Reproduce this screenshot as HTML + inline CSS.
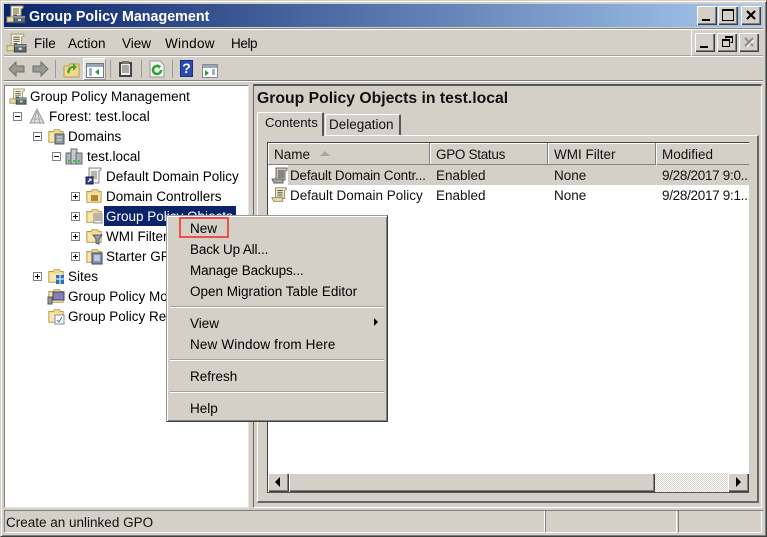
<!DOCTYPE html>
<html><head><meta charset="utf-8">
<style>
html,body{margin:0;padding:0;width:767px;height:537px;overflow:hidden;background:#d4d0c8}
body{font-family:"Liberation Sans",sans-serif;font-size:13.5px;color:#000;position:relative}
.a{position:absolute}
.t{position:absolute;white-space:nowrap;line-height:22px;height:20px}
svg{position:absolute;display:block}
.btn{position:absolute;width:19px;height:18px;background:#d4d0c8;box-shadow:inset 1px 1px 0 #fff,inset -1px -1px 0 #404040,inset -2px -2px 0 #808080}
.sep{position:absolute;height:1px;background:#a5a29b;left:170px;width:214px;box-shadow:0 1px 0 #fff}
.exp{position:absolute;width:7px;height:7px;border:1px solid #808080;background:#fff}
.exp:before{content:"";position:absolute;left:1px;top:3px;width:5px;height:1px;background:#000}
.exp.p:after{content:"";position:absolute;left:3px;top:1px;width:1px;height:5px;background:#000}
.hd{position:absolute;top:143px;height:22px;line-height:23px;background:#d4d0c8;box-shadow:inset -1px -1px 0 #808080,inset 1px 1px 0 #fff;padding-left:6px;box-sizing:border-box;color:#111}
</style></head><body>
<svg width="0" height="0"><defs>
<symbol id="scroll" viewBox="0 0 20 20"><path d="M5 2h12v2l-2 1v9H5z" fill="#f4ecc8" stroke="#8c8460"/><path d="M7 5h6M7 7h6M7 9h6M7 11h6" stroke="#555"/><path d="M1 13h12v4H3z" fill="#e8dca8" stroke="#8c8460"/></symbol>
<symbol id="gp" viewBox="0 0 20 20"><path d="M5 1h12v2l-2 1v8H5z" fill="#f6f0d0" stroke="#a89c70"/><path d="M7 4h6M7 6h6M7 8h6M7 10h4" stroke="#666"/><path d="M1 12h10v5H1z" fill="#e6d9a2" stroke="#a89c70"/><rect x="8" y="11" width="11" height="7" fill="#5f6b70" stroke="#3a4448"/><rect x="8" y="11" width="11" height="2" fill="#8a979c"/><rect x="12" y="14" width="3" height="2" fill="#d8d8d8"/></symbol>
<symbol id="folder" viewBox="0 0 20 20"><path d="M2 5h5l1-2h6l1 2h3v12H2z" fill="#f3d98c" stroke="#b59a54"/><path d="M3 7h14v9H3z" fill="#f8e7ab"/></symbol>
</defs></svg>

<!-- window frame -->
<div class="a" style="left:0;top:0;width:767px;height:537px;box-sizing:border-box;border:1px solid #404040;border-top-color:#d4d0c8;border-left-color:#d4d0c8;box-shadow:inset 1px 1px 0 #fff,inset -1px -1px 0 #808080"></div>

<!-- title bar -->
<div class="a" style="left:4px;top:4px;width:759px;height:23px;background:linear-gradient(90deg,#0a246a 0%,#a6caf0 100%)"></div>
<svg style="left:6px;top:5px" width="20" height="20"><use href="#gp"/></svg>
<div class="t" style="left:29px;top:6px;color:#fff;font-weight:bold;font-size:14.3px">Group Policy Management</div>
<div class="btn" style="left:697px;top:6px;width:20px;height:19px"><div class="a" style="left:5px;top:13px;width:8px;height:2px;background:#000"></div></div>
<div class="btn" style="left:718px;top:6px;width:20px;height:19px"><div class="a" style="left:4px;top:3px;width:10px;height:9px;border:1px solid #000;border-top-width:2px"></div></div>
<div class="btn" style="left:741px;top:6px;width:20px;height:19px"><svg style="left:5px;top:4px" width="11" height="10"><path d="M1 1l8 8M9 1l-8 8" stroke="#000" stroke-width="2"/></svg></div>

<!-- menu bar -->
<div class="a" style="left:4px;top:28px;width:759px;height:1px;background:#808080"></div>
<div class="a" style="left:4px;top:29px;width:759px;height:1px;background:#fff"></div>
<div class="a" style="left:4px;top:56px;width:759px;height:1px;background:#fff"></div>
<div class="a" style="left:4px;top:55px;width:759px;height:1px;background:#a5a29b"></div>
<svg style="left:6px;top:33px" width="21" height="21"><use href="#gp"/></svg>
<div class="t" style="left:34px;top:33px">File</div>
<div class="t" style="left:68px;top:33px">Action</div>
<div class="t" style="left:122px;top:33px">View</div>
<div class="t" style="left:165px;top:33px;letter-spacing:.3px">Window</div>
<div class="t" style="left:231px;top:33px;letter-spacing:-.4px">Help</div>
<div class="a" style="left:691px;top:29px;width:1px;height:27px;background:#fff"></div>
<div class="btn" style="left:695px;top:33px;width:20px;height:19px"><div class="a" style="left:5px;top:13px;width:8px;height:2px;background:#000"></div></div>
<div class="btn" style="left:717px;top:33px;width:20px;height:19px"><svg style="left:4px;top:3px" width="13" height="12"><path d="M4.500 2.500V.5h7v6h-2M4 1.500h7" stroke="#000" fill="none"/><rect x="1.500" y="3.500" width="7" height="7" fill="none" stroke="#000"/><path d="M1 4.500h8" stroke="#000"/></svg></div>
<div class="btn" style="left:739px;top:33px;width:20px;height:19px"><svg style="left:5px;top:4px" width="12" height="11"><path d="M1 1l8 8M9 1l-8 8" stroke="#8f8d88" stroke-width="2"/><path d="M3 10l7-7" stroke="#fff"/></svg></div>

<!-- toolbar -->
<svg style="left:8px;top:60px" width="18" height="18"><path d="M1 9l7-7v4h8v6H8v4z" fill="#9a9a94" stroke="#6e6e6a"/></svg>
<svg style="left:31px;top:60px" width="18" height="18"><path d="M17 9l-7-7v4H2v6h8v4z" fill="#9a9a94" stroke="#6e6e6a"/></svg>
<div class="a" style="left:55px;top:60px;width:1px;height:18px;background:#999"></div>
<svg style="left:63px;top:60px" width="17" height="18"><path d="M1 6h5l1-2h9v13H1z" fill="#f3d98c" stroke="#b59a54"/><path d="M4 12c1-5 4-6 6-6V3l4 4-4 4V8c-2 0-3 2-4 6z" fill="#46a030"/></svg>
<div class="a" style="left:83px;top:58px;width:23px;height:22px;box-sizing:border-box;background:#e8e6e0;box-shadow:inset 1px 1px 0 #fff,inset -1px -1px 0 #999"></div>
<svg style="left:86px;top:63px" width="18" height="15"><rect x=".5" y=".5" width="17" height="14" fill="#fff" stroke="#778"/><rect x="1" y="1" width="16" height="3" fill="#98a8b8"/><path d="M3 6h3M3 8h3M3 10h3M3 12h3" stroke="#4060a0"/><path d="M13 6v6l-4-3z" fill="#2a9a30"/></svg>
<div class="a" style="left:110px;top:60px;width:1px;height:18px;background:#999"></div>
<svg style="left:118px;top:60px" width="15" height="18"><rect x="1" y="2" width="13" height="15" fill="#444"/><rect x="3" y="4" width="9" height="11" fill="#eee"/><rect x="4" y="1" width="7" height="3" fill="#777"/><path d="M4 6h7M4 8h7M4 10h7M4 12h7" stroke="#666"/></svg>
<div class="a" style="left:141px;top:60px;width:1px;height:18px;background:#999"></div>
<svg style="left:149px;top:60px" width="16" height="18"><path d="M1 1h10l4 4v12H1z" fill="#f4f4f4" stroke="#999"/><path d="M12 10a4 4 0 1 1-2-3.500" fill="none" stroke="#2aa52a" stroke-width="2.500"/><path d="M8 4l4 2-2 3z" fill="#2aa52a"/></svg>
<div class="a" style="left:172px;top:60px;width:1px;height:18px;background:#999"></div>
<div class="a" style="left:180px;top:60px;width:13px;height:17px;background:#2b4bb0;color:#fff;font-weight:bold;font-size:14px;line-height:17px;text-align:center;box-shadow:inset 0 0 0 1px #1b2f80">?</div>
<svg style="left:202px;top:64px" width="16" height="14"><rect x=".5" y=".5" width="15" height="13" fill="#fff" stroke="#889"/><rect x="1" y="1" width="14" height="3" fill="#98a8b8"/><path d="M3 6v6l4-3z" fill="#2a9a30"/><path d="M10 6h3M10 8h3M10 10h3" stroke="#4060a0"/></svg>

<!-- toolbar bottom -->
<div class="a" style="left:4px;top:80px;width:759px;height:1px;background:#808080"></div>
<div class="a" style="left:4px;top:81px;width:759px;height:1px;background:#fff"></div>

<!-- tree pane -->
<div class="a" style="left:4px;top:85px;width:245px;height:423px;box-sizing:border-box;background:#fff;border:1px solid #808080;border-right-color:#e8e6e0;border-bottom-color:#e8e6e0"></div>
<svg style="left:9px;top:88px" width="18" height="18"><use href="#gp"/></svg>
<div class="t" style="left:30px;top:86px">Group Policy Management</div>
<div class="exp" style="left:13px;top:112px"></div>
<svg style="left:28px;top:107px" width="18" height="18"><path d="M9 2l7 14H2z" fill="#ddd" stroke="#999"/><path d="M9 2l-3 14M9 2l3 14M4 12h10" stroke="#aaa" fill="none"/></svg>
<div class="t" style="left:49px;top:106px;letter-spacing:.1px">Forest: test.local</div>
<div class="exp" style="left:33px;top:132px"></div>
<svg style="left:47px;top:127px" width="18" height="18"><use href="#folder"/><rect x="8" y="7" width="9" height="10" fill="#8a9a98" stroke="#556"/><path d="M10 10h5M10 13h5" stroke="#dde"/></svg>
<div class="t" style="left:68px;top:126px">Domains</div>
<div class="exp" style="left:52px;top:152px"></div>
<svg style="left:65px;top:147px" width="18" height="18"><rect x="1" y="6" width="6" height="11" fill="#a8b4b4" stroke="#667"/><rect x="6" y="2" width="6" height="15" fill="#c2cccc" stroke="#667"/><rect x="11" y="6" width="6" height="11" fill="#a8b4b4" stroke="#667"/><path d="M3 14h2M8 14h2M13 14h2" stroke="#3fc03f" stroke-width="2"/></svg>
<div class="t" style="left:87px;top:146px">test.local</div>
<svg style="left:85px;top:167px" width="18" height="18"><path d="M4 1h12v2l-2 1v12H4z" fill="#f4f1e4" stroke="#888"/><path d="M6 5h6M6 7h6M6 9h6M6 11h6" stroke="#777"/><rect x="1" y="10" width="7" height="7" fill="#3040a0" stroke="#223"/><path d="M3 15l3-3M4 12h2v2" stroke="#fff" fill="none"/></svg>
<div class="t" style="left:106px;top:166px">Default Domain Policy</div>
<div class="exp p" style="left:71px;top:192px"></div>
<svg style="left:85px;top:187px" width="18" height="18"><use href="#folder"/><rect x="6" y="8" width="7" height="6" fill="#b08a30"/></svg>
<div class="t" style="left:106px;top:186px">Domain Controllers</div>
<div class="exp p" style="left:71px;top:212px"></div>
<svg style="left:85px;top:207px" width="18" height="18"><use href="#folder"/><path d="M9 7h8v9H9z" fill="#f4f1e4" stroke="#888"/><path d="M10 9h6M10 11h6M10 13h6" stroke="#777"/></svg>
<div class="t" style="left:104px;top:206px;width:132px;height:20px;background:#0a246a;color:#fff;padding-left:2px;box-sizing:border-box">Group Policy Objects</div>
<div class="exp p" style="left:71px;top:232px"></div>
<svg style="left:85px;top:227px" width="18" height="18"><use href="#folder"/><path d="M8 8h9l-3 4v5l-3-1v-4z" fill="#90a0a8" stroke="#556"/></svg>
<div class="t" style="left:106px;top:226px">WMI Filters</div>
<div class="exp p" style="left:71px;top:252px"></div>
<svg style="left:85px;top:247px" width="18" height="18"><use href="#folder"/><rect x="7" y="6" width="10" height="11" fill="#7d93b8" stroke="#445"/><path d="M9 9h6M9 11h6M9 13h6" stroke="#fff"/></svg>
<div class="t" style="left:106px;top:246px">Starter GPOs</div>
<div class="exp p" style="left:33px;top:272px"></div>
<svg style="left:47px;top:267px" width="18" height="18"><use href="#folder"/><rect x="9" y="8" width="8" height="9" fill="#2a70c0"/><path d="M13 8v9M9 12h8" stroke="#fff"/></svg>
<div class="t" style="left:68px;top:266px">Sites</div>
<svg style="left:47px;top:287px" width="18" height="18"><use href="#folder"/><rect x="6" y="5" width="11" height="8" fill="#8080c0" stroke="#445"/><rect x="1" y="10" width="4" height="7" fill="#999" stroke="#556"/></svg>
<div class="t" style="left:68px;top:286px">Group Policy Modeling</div>
<svg style="left:47px;top:307px" width="18" height="18"><use href="#folder"/><rect x="8" y="8" width="9" height="9" fill="#fff" stroke="#889"/><path d="M10 13l2 2 3-5" stroke="#3a70b0" fill="none"/></svg>
<div class="t" style="left:68px;top:306px">Group Policy Results</div>

<!-- right pane -->
<div class="a" style="left:253px;top:84px;width:509px;height:424px;box-sizing:border-box;border-top:2px solid #555;border-left:1px solid #666;border-right:1px solid #fff;border-bottom:1px solid #fff"></div>
<div class="t" style="left:257px;top:88px;font-weight:bold;font-size:15.75px;color:#111">Group Policy Objects in test.local</div>
<div class="a" style="left:257px;top:135px;width:502px;height:368px;box-sizing:border-box;border-top:1px solid #fff;border-right:2px solid #666;border-bottom:2px solid #666;border-left:1px solid #fff"></div>
<div class="a" style="left:257px;top:112px;width:67px;height:24px;background:#d4d0c8;box-sizing:border-box;border:1px solid #fff;border-bottom:0;border-right:2px solid #555;border-radius:2px 2px 0 0"></div>
<div class="t" style="left:265px;top:112px;font-size:13.2px;color:#111">Contents</div>
<div class="a" style="left:325px;top:114px;width:76px;height:21px;background:#d4d0c8;box-sizing:border-box;border:1px solid #fff;border-bottom:0;border-right:2px solid #555;border-radius:2px 2px 0 0"></div>
<div class="t" style="left:329px;top:114px;color:#111">Delegation</div>

<!-- list -->
<div class="a" style="left:267px;top:142px;width:482px;height:351px;box-sizing:border-box;background:#fff;border:1px solid #444;border-right:0;border-bottom:2px solid #555"></div>
<div class="hd" style="left:268px;width:162px">Name</div>
<svg style="left:319px;top:150px" width="12" height="7"><path d="M6 1l5 5H1z" fill="#a8a6a0"/></svg>
<div class="hd" style="left:430px;width:118px;letter-spacing:-.3px">GPO Status</div>
<div class="hd" style="left:548px;width:108px">WMI Filter</div>
<div class="hd" style="left:656px;width:93px;box-shadow:inset 1px 1px 0 #fff,inset 0 -1px 0 #808080">Modified</div>
<div class="a" style="left:288px;top:165px;width:461px;height:20px;background:#d4d0c8"></div>
<svg style="left:271px;top:166px" width="18" height="18"><path d="M5 2h11v2l-2 1v9H5z" fill="#c8c6bc" stroke="#666"/><path d="M7 5h6M7 7h6M7 9h6M7 11h6" stroke="#444"/><path d="M1 13h11v4H3z" fill="#a8a69c" stroke="#666"/></svg>
<div class="t" style="left:290px;top:165px;color:#111;letter-spacing:-.2px">Default Domain Contr...</div>
<div class="t" style="left:436px;top:165px;color:#111">Enabled</div>
<div class="t" style="left:554px;top:165px;color:#111">None</div>
<div class="t" style="left:662px;top:165px;color:#111;width:87px;overflow:hidden;letter-spacing:-.3px">9/28/2017 9:0...</div>
<svg style="left:271px;top:186px" width="18" height="18"><use href="#scroll"/></svg>
<div class="t" style="left:290px;top:185px;color:#111">Default Domain Policy</div>
<div class="t" style="left:436px;top:185px;color:#111">Enabled</div>
<div class="t" style="left:554px;top:185px;color:#111">None</div>
<div class="t" style="left:662px;top:185px;color:#111;width:87px;overflow:hidden;letter-spacing:-.3px">9/28/2017 9:1...</div>

<!-- scrollbar -->
<div class="a" style="left:268px;top:473px;width:481px;height:19px;background:repeating-conic-gradient(#d4d0c8 0 25%,#fff 0 50%) 0 0/2px 2px"></div>
<div class="btn" style="left:268px;top:473px;width:21px;height:19px"><svg style="left:6px;top:4px" width="8" height="10"><path d="M6 0v10L1 5z" fill="#000"/></svg></div>
<div class="btn" style="left:289px;top:473px;width:366px;height:19px"></div>
<div class="btn" style="left:728px;top:473px;width:21px;height:19px"><svg style="left:7px;top:4px" width="8" height="10"><path d="M1 0v10l5-5z" fill="#000"/></svg></div>

<!-- status bar -->
<div class="a" style="left:4px;top:510px;width:759px;height:1px;background:#808080"></div>
<div class="t" style="left:6px;top:512px;color:#111">Create an unlinked GPO</div>
<div class="a" style="left:4px;top:511px;width:541px;height:22px;box-sizing:border-box;border-right:1px solid #fff;border-bottom:1px solid #fff;border-left:1px solid #808080"></div>
<div class="a" style="left:545px;top:511px;width:132px;height:22px;box-sizing:border-box;border-left:1px solid #808080;border-right:1px solid #fff;border-bottom:1px solid #fff"></div>
<div class="a" style="left:678px;top:511px;width:84px;height:22px;box-sizing:border-box;border-left:1px solid #808080;border-right:1px solid #fff;border-bottom:1px solid #fff"></div>

<!-- context menu -->
<div class="a" style="left:166px;top:215px;width:222px;height:207px;box-sizing:border-box;background:#d4d0c8;border:1px solid #404040;border-top-color:#999;border-left-color:#999;box-shadow:inset 1px 1px 0 #fff,inset -1px -1px 0 #808080"></div>
<div class="a" style="left:179px;top:217px;width:50px;height:21px;box-sizing:border-box;border:2px solid #e8504a"></div>
<div class="t" style="left:190px;top:218px">New</div>
<div class="t" style="left:190px;top:239px;letter-spacing:-.15px">Back Up All...</div>
<div class="t" style="left:190px;top:260px;letter-spacing:-.12px">Manage Backups...</div>
<div class="t" style="left:190px;top:281px">Open Migration Table Editor</div>
<div class="sep" style="top:306px"></div>
<div class="t" style="left:190px;top:313px">View</div>
<svg style="left:373px;top:318px" width="6" height="9"><path d="M1 0v8l4-4z" fill="#000"/></svg>
<div class="t" style="left:190px;top:334px;letter-spacing:.15px">New Window from Here</div>
<div class="sep" style="top:359px"></div>
<div class="t" style="left:190px;top:366px">Refresh</div>
<div class="sep" style="top:391px"></div>
<div class="t" style="left:190px;top:398px">Help</div>
</body></html>
